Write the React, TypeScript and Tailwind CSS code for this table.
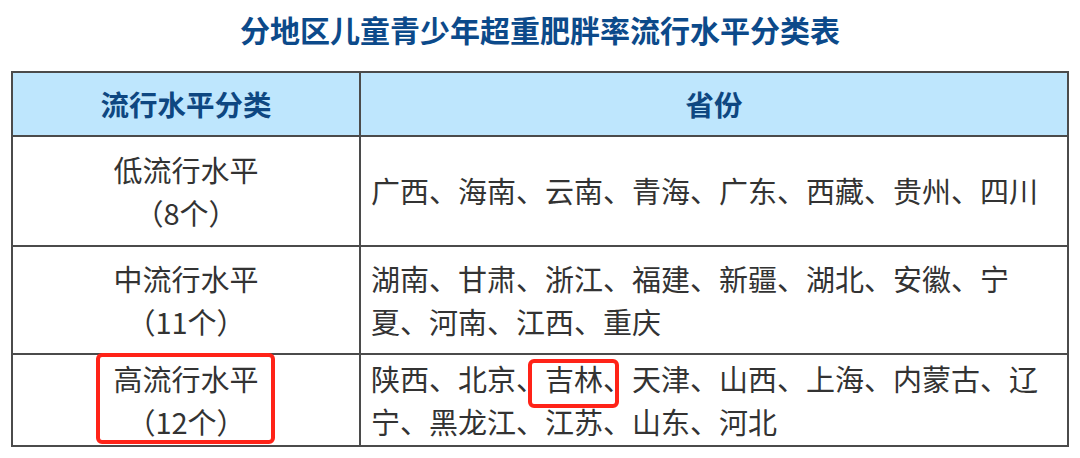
const rows = [
  {
    level: "低流行水平",
    count: "（8个）",
    provinces: "广西、海南、云南、青海、广东、西藏、贵州、四川",
    height: "h-[110px] border-b-2",
  },
  {
    level: "中流行水平",
    count: "（11个）",
    provinces: "湖南、甘肃、浙江、福建、新疆、湖北、安徽、宁夏、河南、江西、重庆",
    height: "h-[108px] border-b-2",
  },
  {
    level: "高流行水平",
    count: "（12个）",
    provinces: "陕西、北京、吉林、天津、山西、上海、内蒙古、辽宁、黑龙江、江苏、山东、河北",
    height: "h-[90px]",
  },
];

const font = "font-['Noto_Sans_CJK_SC','Noto_Sans',sans-serif]";

export default function App() {
  return (
    <div className={`relative w-[1080px] h-[458px] bg-white ${font}`}>
      {/* title */}
      <div className="h-[71px] pt-[8px] text-center">
        <h1 className="text-[30px] leading-[42px] font-bold text-[#0c4a8a]">
          分地区儿童青少年超重肥胖率流行水平分类表
        </h1>
      </div>

      {/* table */}
      <div className="ml-[11px] w-[1058px] border-2 border-[#4b4b4b]">
        <div className="grid grid-cols-[348px_1fr] h-[64px] border-b-2 border-[#4b4b4b] bg-[#bee6fd] text-[28.5px] font-bold text-[#0e4781]">
          <div className="flex items-center justify-center border-r-2 border-[#4b4b4b]">流行水平分类</div>
          <div className="flex items-center justify-center">省份</div>
        </div>

        {rows.map((row) => (
          <div
            key={row.level}
            className={`grid grid-cols-[348px_1fr] border-[#4b4b4b] text-[29px] leading-[43.5px] text-[#333333] ${row.height}`}
          >
            <div className="flex flex-col items-center justify-center border-r-2 border-[#4b4b4b]">
              <span>{row.level}</span>
              <span>{row.count}</span>
            </div>
            <div className="flex items-center pl-[10px] pr-[11px]">
              <p>{row.provinces}</p>
            </div>
          </div>
        ))}
      </div>

      {/* red highlight marks */}
      <div className="absolute left-[96px] top-[353px] w-[179px] h-[91px] border-[4px] border-[#ff2318] rounded-[6px]" />
      <div className="absolute left-[528px] top-[359px] w-[91px] h-[49px] border-[4px] border-[#ff2318] rounded-[6px]" />
    </div>
  );
}
